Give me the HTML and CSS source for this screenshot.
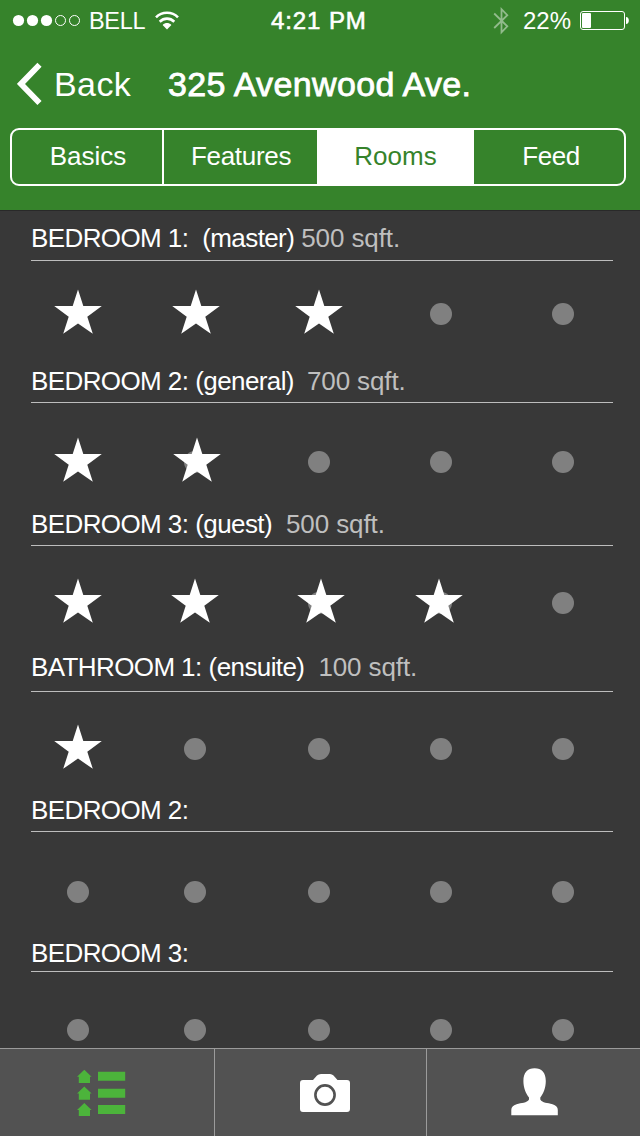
FILE: index.html
```html
<!DOCTYPE html>
<html lang="en">
<head>
<meta charset="utf-8">
<title>325 Avenwood Ave.</title>
<link rel="stylesheet" href="styles.css">
</head>
<body>
<svg class="symbols" width="0" height="0">
  <symbol id="dot" viewBox="0 0 50 50"><circle cx="25" cy="25" r="11" fill="#808080"/></symbol>
  <symbol id="star" viewBox="0 0 50 50"><path fill="#fff" d="M25 .5 30.3 17H48.8L34.3 27.8 39.8 44.8 25 34.6 10.2 44.8 15.7 27.8 1.2 17H19.7Z"/></symbol>
</svg>
<div class="app">
  <header class="header">
    <div class="status">
      <div class="status-left">
        <svg width="70" height="14" viewBox="0 0 70 14"><g fill="#fff"><circle cx="6.5" cy="6.5" r="5.6"/><circle cx="20.5" cy="6.5" r="5.6"/><circle cx="34.5" cy="6.5" r="5.6"/></g><g fill="none" stroke="#fff"><circle cx="48.5" cy="6.5" r="5"/><circle cx="62.5" cy="6.5" r="5"/></g></svg>
        <span class="carrier">BELL</span>
        <svg class="wifi" width="24" height="20" viewBox="0 0 24 20"><g fill="none" stroke="#fff" stroke-width="2.6"><path d="M1 6.3C7 .3 17 .3 23 6.3"/><path d="M4.7 10.7C9 6.6 15 6.6 19.3 10.7"/></g><path d="M7.6 14C10.3 11.4 13.7 11.4 16.4 14L12 18.6Z" fill="#fff"/></svg>
      </div>
      <span class="time">4:21 PM</span>
      <div class="status-right">
        <svg width="16" height="28" viewBox="0 0 16 28"><path d="M1.2 6.5 14.3 19.3 8.5 25.3V2.2L14.3 8.2 1.2 21" fill="none" stroke="#92bb8c" stroke-width="1.8"/></svg>
        <span class="percent">22%</span>
        <svg class="battery" width="50" height="20" viewBox="0 0 50 20"><rect x=".5" y=".5" width="44" height="18" rx="2.5" fill="none" stroke="#fff"/><rect x="2" y="2" width="9" height="15" rx="1" fill="#fff"/><path d="M46 6C49.8 6 49.8 13 46 13Z" fill="#fff"/></svg>
      </div>
    </div>
    <div class="navbar">
      <svg width="26" height="44" viewBox="0 0 26 44"><path d="M22.5 2.8 4 21.9 22.5 41" fill="none" stroke="#fff" stroke-width="5.8"/></svg>
      <span class="back">Back</span>
      <h1 class="title">325 Avenwood Ave.</h1>
    </div>
    <nav class="segments">
      <span class="segment basics">Basics</span>
      <span class="segment features">Features</span>
      <span class="segment rooms">Rooms</span>
      <span class="segment feed">Feed</span>
    </nav>
  </header>
  <main class="list">
    <section class="room room-a">
      <h2 class="room-head"><span class="name">BEDROOM 1:</span><span class="kind wide">(master)</span><span class="area near">500 sqft.</span></h2>
      <div class="rating">
        <svg><use href="#star"/></svg>
        <svg><use href="#star" x="1"/></svg>
        <svg><use href="#star"/></svg>
        <svg><use href="#dot"/></svg>
        <svg><use href="#dot"/></svg>
      </div>
    </section>
    <section class="room room-b">
      <h2 class="room-head"><span class="name">BEDROOM 2:</span><span class="kind">(general)</span><span class="area">700 sqft.</span></h2>
      <div class="rating">
        <svg><use href="#star"/></svg>
        <svg><use href="#dot"/><use href="#star" x="2"/></svg>
        <svg><use href="#dot"/></svg>
        <svg><use href="#dot"/></svg>
        <svg><use href="#dot"/></svg>
      </div>
    </section>
    <section class="room room-c">
      <h2 class="room-head"><span class="name">BEDROOM 3:</span><span class="kind">(guest)</span><span class="area">500 sqft.</span></h2>
      <div class="rating">
        <svg><use href="#star"/></svg>
        <svg><use href="#star"/></svg>
        <svg><use href="#dot"/><use href="#star" x="2"/></svg>
        <svg><use href="#dot"/><use href="#star" x="-2"/></svg>
        <svg><use href="#dot"/></svg>
      </div>
    </section>
    <section class="room room-d">
      <h2 class="room-head"><span class="name">BATHROOM 1:</span><span class="kind">(ensuite)</span><span class="area">100 sqft.</span></h2>
      <div class="rating">
        <svg><use href="#star"/></svg>
        <svg><use href="#dot"/></svg>
        <svg><use href="#dot"/></svg>
        <svg><use href="#dot"/></svg>
        <svg><use href="#dot"/></svg>
      </div>
    </section>
    <section class="room room-e">
      <h2 class="room-head"><span class="name">BEDROOM 2:</span></h2>
      <div class="rating">
        <svg><use href="#dot"/></svg>
        <svg><use href="#dot"/></svg>
        <svg><use href="#dot"/></svg>
        <svg><use href="#dot"/></svg>
        <svg><use href="#dot"/></svg>
      </div>
    </section>
    <section class="room room-f">
      <h2 class="room-head"><span class="name">BEDROOM 3:</span></h2>
      <div class="rating">
        <svg><use href="#dot"/></svg>
        <svg><use href="#dot"/></svg>
        <svg><use href="#dot"/></svg>
        <svg><use href="#dot"/></svg>
        <svg><use href="#dot"/></svg>
      </div>
    </section>
  </main>
  <nav class="tabbar">
    <div class="tab tab-list">
      <svg width="50" height="50" viewBox="0 0 50 50" fill="#4cb43b"><path d="M0 8.8 7.3 1.8 14.6 8.8H13V15H1.8V8.8ZM0 25.6 7.3 18.6 14.6 25.6H13V31.8H1.8V25.6ZM0 41.9 7.3 34.9 14.6 41.9H13V48.1H1.8V41.9Z"/><path d="M21 3.7H48.2V12.7H21ZM21 20.7H48.2V29.7H21ZM21 37H48.2V46H21Z"/></svg>
    </div>
    <div class="tab tab-camera">
      <svg width="50" height="38" viewBox="0 0 50 38"><path d="M3 6H13L17 1.6Q18.5 0 21 0H30Q32 0 33.5 1.6L37.5 6H47Q50 6 50 9V35Q50 38 47 38H3Q0 38 0 35V9Q0 6 3 6Z" fill="#fff"/><circle cx="25" cy="21" r="9.6" fill="none" stroke="#525252" stroke-width="2.6"/></svg>
    </div>
    <div class="tab tab-profile">
      <svg width="48" height="48" viewBox="0 0 48 48"><path d="M12.4 13C12.4 4.5 16.5.3 23.6.3S34.8 4.5 34.8 13C34.8 20 32.3 25.5 29.3 29.6V31.5C31.5 35 36.5 34.8 41.5 36.2Q46.8 37.6 46.8 42V47.2H.3V42Q.3 37.6 5.6 36.2C10.5 34.8 15.8 35 18 31.5V29.6C15 25.5 12.4 20 12.4 13Z" fill="#fff"/></svg>
    </div>
  </nav>
</div>
</body>
</html>
```
FILE: styles.css
```css
* { box-sizing: border-box; }
body {
  margin: 0;
  font-family: "Liberation Sans", Arial, sans-serif;
  color: #fff;
  background: #383838;
}
svg { display: block; flex: none; }
.symbols { display: none; }
.app {
  display: flex;
  flex-direction: column;
  width: 640px;
  height: 1136px;
  overflow: hidden;
}
.header {
  height: 211px;
  flex: none;
  background: #36832b;
  border-bottom: 1px solid #292929;
}
.status {
  display: grid;
  grid-template-columns: 259px 1fr 158px;
  align-items: center;
  height: 42px;
  padding: 0 12px;
  font-size: 24px;
  line-height: 42px;
}
.status-left, .status-right { display: flex; align-items: center; }
.carrier { width: 57px; margin-left: 7px; font-size: 23.5px; letter-spacing: -.3px; }
.wifi { margin-left: 9px; }
.time { letter-spacing: .9px; -webkit-text-stroke: .6px #fff; }
.status-right { padding-left: 23px; }
.percent { width: 50px; margin-left: 14px; }
.battery { margin-left: 9px; }
.navbar {
  display: flex;
  align-items: center;
  height: 86px;
  padding: 0 0 2px 17px;
  font-size: 34px;
}
.back { width: 114px; margin-left: 11px; letter-spacing: .4px; }
.title {
  margin: 0;
  font-size: 34px;
  font-weight: 400;
  letter-spacing: .35px;
  -webkit-text-stroke: .8px #fff;
}
.segments {
  display: grid;
  grid-template-columns: 152px 153px 157px 150px;
  width: 616px;
  height: 58px;
  margin-left: 10px;
  border: 2px solid #fff;
  border-radius: 9px;
  font-size: 26px;
  line-height: 52px;
  text-align: center;
}
.basics { padding-left: 2px; border-right: 2px solid #fff; }
.features { padding-left: 1px; letter-spacing: -.3px; }
.rooms { color: #36832b; background: #fff; }
.feed { padding-left: 4px; letter-spacing: -.4px; }
.list { flex: none; height: 837px; overflow: hidden; }
.room { height: 143px; padding: 0 27px 0 31px; }
.room-head {
  display: flex;
  height: 50px;
  margin: 0;
  border-bottom: 1px solid #bdbdbd;
  font-size: 26px;
  font-weight: 400;
  line-height: 54px;
  letter-spacing: -.6px;
  white-space: pre;
}
.kind { margin-left: 7px; }
.kind.wide { margin-left: 14px; }
.area { margin-left: 14px; color: #bfbfbf; letter-spacing: -.1px; }
.area.near { margin-left: 7px; }
.room-b .area { margin-left: 13px; }
.rating {
  display: grid;
  grid-template-columns: 117px 124px 122px 122px 50px;
  padding-left: 22px;
  margin-top: 28px;
}
.rating svg { width: 50px; height: 50px; overflow: visible; }
.rating use { width: 50px; height: 50px; }
.room-b .room-head { height: 49px; }
.room-b .rating { margin-top: 34px; }
.room-c .room-head { height: 49px; }
.room-c .rating { margin-top: 32px; }
.room-d .room-head { height: 52px; }
.room-d .rating { margin-top: 32px; }
.room-e .room-head { height: 49px; }
.room-e .rating { margin-top: 35px; }
.room-f .room-head { height: 46px; }
.room-f .rating { margin-top: 33px; }
.tabbar {
  display: grid;
  grid-template-columns: 215px 212px 213px;
  flex: none;
  height: 88px;
  background: #525252;
  border-top: 1px solid #9b9b9b;
}
.tab { display: flex; justify-content: center; }
.tab-list, .tab-camera { border-right: 1px solid #9b9b9b; }
.tab-list { padding: 19px 10px 0 0; }
.tab-camera { padding: 25px 0 0 9px; }
.tab-profile { padding: 19px 0 0 3px; }
```
